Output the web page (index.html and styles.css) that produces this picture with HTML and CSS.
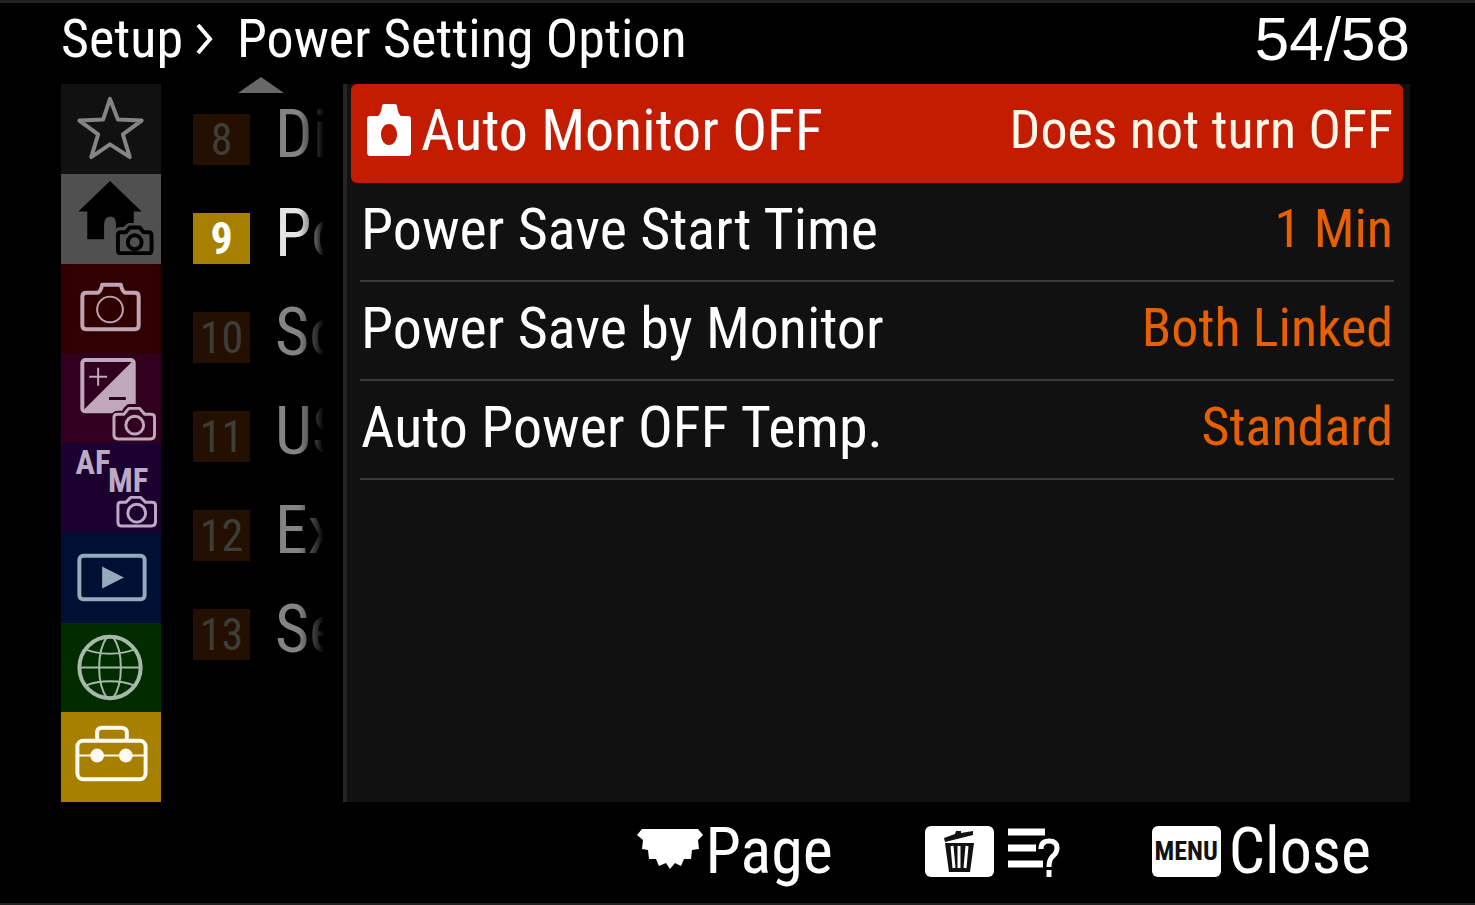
FILE: index.html
```html
<!DOCTYPE html>
<html lang="en">
<head>
<meta charset="utf-8">
<meta name="viewport" content="width=device-width, initial-scale=1">
<title>Power Setting Option</title>
<link rel="stylesheet" href="styles.css">
</head>
<body>
<div class="screen">
  <header class="header">
    <h1 class="crumbs"><span>Setup</span><svg class="chevron" viewBox="0 0 18 32" aria-hidden="true"><path d="M3 2 L15 16 L3 30"/></svg><span>Power Setting Option</span></h1>
    <span class="page-count">54/58</span>
  </header>

  <main class="main">
    <nav class="tabs" aria-label="Menu tabs">
      <button class="tab tab-my" aria-label="My Menu"><svg viewBox="0 0 100 90"><path class="line" d="M49 15 L57 36 L81 37 L62 51 L69 74 L49 61 L30 74 L37 51 L18 37 L42 36 Z"/></svg></button>
      <button class="tab tab-main" aria-label="Main"><svg viewBox="0 0 100 90"><path class="solid" d="M49 7 L81 38 H73 V66 H55 V50 Q55 43 49 43 Q43 44 43 51 V66 H26 V38 H17 Z"/><path class="halo" d="M60 58 H64 L69 54 H79 L83 58 H88 Q91 58 91 61 V77 Q91 80 88 80 H60 Q57 80 57 77 V61 Q57 58 60 58 Z"/><path class="line" d="M60 59 H65 L69 54 H79 L83 59 H88 Q91 59 91 62 V77 Q91 80 88 80 H60 Q57 80 57 77 V62 Q57 59 60 59 Z"/><circle class="line" cx="74" cy="69" r="7"/></svg></button>
      <button class="tab tab-shoot" aria-label="Shooting"><svg viewBox="0 0 100 90"><path class="line" d="M25 29 H37 Q40 27 41 21 H60 Q61 27 64 29 H74 Q78 29 78 33 V62 Q78 66 74 66 H25 Q21 66 21 62 V33 Q21 29 25 29 Z"/><circle class="thin" cx="49" cy="46" r="13"/></svg></button>
      <button class="tab tab-exp" aria-label="Exposure"><svg viewBox="0 0 100 90"><rect class="line" x="21" y="6" width="52" height="52" rx="3"/><path class="solid" d="M73 6 V58 H21 Z"/><path class="thin" d="M28 23 H46 M37 14 V32"/><path class="minus" d="M48 45 H65"/><path class="halo" d="M57 62 H64 Q67 55 69 55 H78 Q80 55 83 62 H90 Q93 62 93 65 V82 Q93 86 90 86 H57 Q54 86 54 82 V65 Q54 62 57 62 Z"/><path class="mid" d="M57 61 H63 L68 55 H79 L84 61 H90 Q94 61 94 64 V82 Q94 86 90 86 H57 Q53 86 53 82 V64 Q53 61 57 61 Z"/><circle class="mid" cx="74" cy="72" r="9"/></svg></button>
      <button class="tab tab-af" aria-label="Focus"><svg viewBox="0 0 100 90"><text class="af" x="14" y="31">AF</text><text class="af" x="47" y="50">MF</text><path class="mid" d="M60 60 H65 L70 55 H80 L85 60 H91 Q95 60 95 63 V80 Q95 84 91 84 H60 Q57 84 57 80 V63 Q57 60 60 60 Z"/><circle class="mid" cx="76" cy="71" r="9"/></svg></button>
      <button class="tab tab-play" aria-label="Playback"><svg viewBox="0 0 100 90"><rect class="line" x="18" y="23" width="66" height="44" rx="4"/><path class="solid" d="M41 34 L63 45 L41 56 Z"/></svg></button>
      <button class="tab tab-net" aria-label="Network"><svg viewBox="0 0 100 90"><circle class="line" cx="49" cy="45" r="31"/><path class="thin" d="M18 45 H80 M25 27 Q35 31 49 31 T73 27 M25 63 Q35 59 49 59 T73 63 M46 14 Q38 25 38 45 T46 76 M52 14 Q60 25 60 45 T52 76"/></svg></button>
      <button class="tab tab-setup" aria-label="Setup" aria-current="true"><svg viewBox="0 0 100 90"><path class="line" d="M36 28 V20 Q36 15 41 15 H60 Q66 15 66 20 V28"/><rect class="line" x="16" y="28" width="69" height="39" rx="6"/><path class="thin" d="M16 43 H85"/><circle class="solid" cx="36" cy="43" r="7"/><circle class="solid" cx="65" cy="43" r="7"/></svg></button>
    </nav>

    <nav class="groups" aria-label="Setup groups">
      <svg class="scroll-up" viewBox="0 0 46 16" aria-hidden="true"><path d="M23 0 L46 16 H0 Z"/></svg>
      <button class="group"><span class="num">8</span><span class="name">Di</span></button>
      <button class="group current" aria-current="true"><span class="num">9</span><span class="name">Po</span></button>
      <button class="group"><span class="num">10</span><span class="name">So</span></button>
      <button class="group"><span class="num">11</span><span class="name">US</span></button>
      <button class="group"><span class="num">12</span><span class="name">Ex</span></button>
      <button class="group"><span class="num">13</span><span class="name">Se</span></button>
    </nav>

    <section class="panel">
      <button class="option selected"><span class="label"><svg class="still" viewBox="0 0 44 52" aria-hidden="true"><path fill-rule="evenodd" d="M3 12 H11 Q14 10 15 2 Q15 0 18 0 H27 Q30 0 30 2 Q31 10 34 12 H41 Q44 12 44 15 V48 Q44 52 41 52 H3 Q0 52 0 48 V15 Q0 12 3 12 Z M22 20 C17 20 14 25 14 30 C14 36 17 41 22 41 C27 41 30 36 30 30 C30 25 27 20 22 20 Z"/></svg>Auto Monitor OFF</span><span class="value">Does not turn OFF</span></button>
      <button class="option"><span class="label">Power Save Start Time</span><span class="value">1 Min</span></button>
      <button class="option"><span class="label">Power Save by Monitor</span><span class="value">Both Linked</span></button>
      <button class="option"><span class="label">Auto Power OFF Temp.</span><span class="value">Standard</span></button>
    </section>
  </main>

  <footer class="footer">
    <button class="hint dial-hint"><svg class="dial" viewBox="0 0 66 40" aria-hidden="true"><path d="M5 0 H61 L66 6 L61 11 L62 20 L55 21 L54 30 L47 30 L44 37 L38 34 L33 40 L29 34 L22 37 L19 30 L12 30 L11 21 L5 20 L6 11 L0 6 Z"/></svg>Page</button>
    <button class="hint help" aria-label="Help"><svg class="trash" viewBox="0 0 69 51" aria-hidden="true"><rect width="69" height="51" rx="6" fill="#fff"/><path fill="#111" d="M19 12 L30 8 L31 5 L36 5 L36 7 L48 5 V9 L20 16 Z M20 17 H49 L45 46 H24 Z"/><path fill="none" stroke="#fff" stroke-width="3" d="M27 20 L29 42 M34 20 V42 M42 20 L40 42"/></svg><svg class="list" viewBox="0 0 52 50" aria-hidden="true"><path d="M0 5 H37 M0 21 H28 M0 37 H35" stroke-width="7"/><path d="M33 22 Q33 14 41 14 Q49 14 49 21 Q49 26 44 30 Q41 33 41 40 M41 43 V50" stroke-width="5"/></svg></button>
    <button class="hint"><span class="menu-key">MENU</span>Close</button>
  </footer>
</div>
</body>
</html>
```
FILE: styles.css
```css
* { box-sizing: border-box; }

body {
  margin: 0;
  background: #000;
  color: #fff;
  font-family: "Roboto Condensed", "Liberation Sans Narrow", "Arial Narrow", Roboto, sans-serif;
}

button {
  margin: 0;
  padding: 0;
  border: 0;
  background: none;
  color: inherit;
  font: inherit;
  text-align: left;
  white-space: nowrap;
}

svg { display: block; flex: none; }

.screen {
  display: flex;
  flex-direction: column;
  min-height: 100vh;
  border-top: 3px solid #222;
  border-bottom: 2px solid #222;
}

.header {
  display: flex;
  justify-content: space-between;
  align-items: center;
  height: 81px;
  padding: 0 65px 10px 61px;
}

.crumbs {
  display: flex;
  align-items: center;
  margin: 0;
  font-size: 54px;
  font-weight: 400;
  line-height: 64px;
  white-space: nowrap;
}

.chevron {
  width: 18px;
  height: 32px;
  margin: 0 24px 0 12px;
  fill: none;
  stroke: #fff;
  stroke-width: 4;
}

.page-count {
  font-family: "Liberation Sans", Arial, sans-serif;
  font-size: 62px;
  line-height: 64px;
}

.main {
  display: flex;
  flex: 1;
  padding: 0 65px 0 61px;
}

.tabs {
  display: flex;
  flex: 0 0 100px;
  flex-direction: column;
}

.tab {
  display: flex;
  flex: 1;
  align-items: center;
  background: var(--tab);
  color: var(--ink);
}

.tab svg { width: 100px; height: 89px; }
.tab-my { --tab: #111; --ink: #858585; }
.tab-main { --tab: #505050; --ink: #000; }
.tab-shoot { --tab: #300000; --ink: #c0a4b4; }
.tab-exp { --tab: #30001e; --ink: #c0a8bc; }
.tab-af { --tab: #1b0030; --ink: #bcaac4; }
.tab-play { --tab: #001035; --ink: #94abbb; }
.tab-net { --tab: #002c00; --ink: #a6b8a8; }
.tab-setup { --tab: #a88000; --ink: #fffaf0; }

.line, .mid, .thin { fill: none; stroke: currentColor; stroke-linejoin: round; }
.line { stroke-width: 4; }
.mid { stroke-width: 3; }
.thin { stroke-width: 2; }
.solid { fill: currentColor; }
.minus { stroke: var(--tab); stroke-width: 3; }
.halo { fill: var(--tab); stroke: var(--tab); stroke-width: 9; }
.af { fill: currentColor; font-size: 33px; font-weight: 700; }

.groups {
  position: relative;
  display: flex;
  flex: 0 0 182px;
  flex-direction: column;
  gap: 9px;
  min-width: 0;
  padding: 10px 0 0 32px;
}

.scroll-up {
  position: absolute;
  top: -7px;
  left: 77px;
  width: 46px;
  height: 16px;
  fill: #686868;
}

.group {
  display: flex;
  align-items: center;
  gap: 25px;
  height: 90px;
  color: #848484;
}

.num {
  flex: 0 0 57px;
  height: 51px;
  background: #241000;
  color: #3e3d38;
  font-size: 44px;
  line-height: 52px;
  text-align: center;
}

.name {
  flex: 1;
  padding-bottom: 8px;
  font-size: 66px;
  line-height: 80px;
  mask-image: linear-gradient(to right, #000 24px, #0005 42px, transparent 49px);
}

.current { color: #e4e4e4; }
.current .num { background: #a88000; color: #fff; font-weight: 700; }

.panel {
  flex: 1;
  min-width: 0;
  padding-right: 7px;
  padding-left: 4px;
  border-left: 4px solid #252525;
  background: #111;
}

.option {
  display: flex;
  justify-content: space-between;
  align-items: center;
  width: calc(100% - 18px);
  height: 99px;
  margin: 0 9px;
  padding: 0 1px 6px;
  border-bottom: 2px solid #3a3a3a;
}

.label {
  display: flex;
  align-items: center;
  gap: 10px;
  font-size: 58px;
  line-height: 72px;
}

.still { width: 44px; height: 52px; fill: #fff; }
.value { color: #e66000; font-size: 54px; line-height: 72px; }

.selected {
  width: 100%;
  margin: 0;
  padding: 0 10px 8px 16px;
  border: 0;
  border-radius: 6px;
  background: #c41c00;
}

.selected .value { color: #fff8e8; }

.footer {
  display: flex;
  justify-content: flex-end;
  align-items: center;
  gap: 92px;
  height: 101px;
  padding: 0 104px 2px 0;
}

.hint {
  display: flex;
  align-items: center;
  gap: 8px;
  font-size: 64px;
  line-height: 80px;
}

.dial-hint { gap: 2px; }
.dial { width: 66px; height: 40px; margin-bottom: 6px; fill: #fff; }
.help { gap: 14px; }
.trash { width: 69px; height: 51px; }
.list { width: 52px; height: 50px; fill: none; stroke: #fff; }

.menu-key {
  width: 69px;
  height: 51px;
  border-radius: 6px;
  background: #fff;
  color: #111;
  font-size: 26px;
  font-weight: 700;
  line-height: 51px;
  text-align: center;
}
```
